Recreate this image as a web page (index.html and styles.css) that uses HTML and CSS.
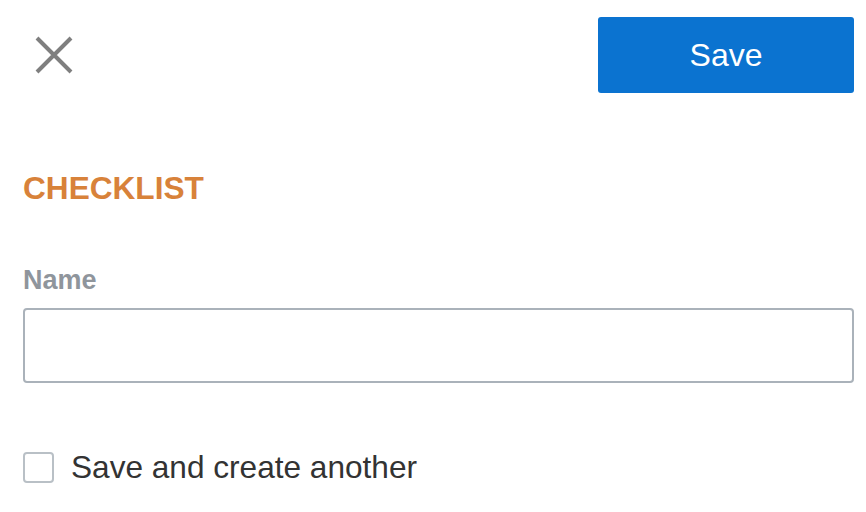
FILE: index.html
```html
<!DOCTYPE html>
<html lang="en">

<head>
  <meta charset="UTF-8" />
  <meta name="viewport" content="width=device-width, initial-scale=1.0" />
  <title>New Checklist</title>
  <link rel="stylesheet" href="styles.css">
</head>

<body>
  <div class="panel">
    <!-- Top bar -->
    <div class="topbar">
      <button class="close-btn" aria-label="Close">
        <svg width="38" height="38" viewBox="0 0 38 38">
          <path d="M2 2 L36 36 M36 2 L2 36" stroke="#7f7f7f" stroke-width="4" stroke-linecap="butt" />
        </svg>
      </button>
      <button class="save-btn">Save</button>
    </div>

    <h2 class="section-title">CHECKLIST</h2>

    <label class="field-label" for="nameInput">Name</label>
    <input class="field-input" type="text" id="nameInput" />

    <label class="check-row">
      <span class="check-box"></span>
      <span class="check-text">Save and create another</span>
    </label>
  </div>
</body>

</html>
```

FILE: styles.css
```css
/* General Styles */
body {
  font-family: "Liberation Sans", Arial, sans-serif;
  margin: 0;
  padding: 0;
  background: #ffffff;
  color: #333333;
}

.panel {
  display: flex;
  flex-direction: column;
  padding: 17px 12px 0 23px;
}

/* Top bar */
.topbar {
  display: flex;
  justify-content: space-between;
  align-items: center;
}

.close-btn {
  background: none;
  border: none;
  padding: 0;
  margin-left: 12px;
  width: 38px;
  height: 38px;
  cursor: pointer;
}

.close-btn svg {
  display: block;
}

.save-btn {
  width: 256px;
  height: 76px;
  background: #0b73d0;
  color: #ffffff;
  border: none;
  border-radius: 3px;
  font-family: "Liberation Sans", Arial, sans-serif;
  font-size: 32px;
  cursor: pointer;
}

/* Section */
.section-title {
  margin: 77px 0 0;
  font-size: 31.6px;
  line-height: 36px;
  font-weight: bold;
  color: #d8823a;
}

.field-label {
  margin-top: 59px;
  font-size: 27px;
  line-height: 30px;
  font-weight: bold;
  color: #8f959c;
}

.field-input {
  box-sizing: border-box;
  margin-top: 13px;
  height: 75px;
  width: 100%;
  border: 2px solid #aab2ba;
  border-radius: 4px;
  font-size: 26px;
  padding: 0 14px;
  outline: none;
}

/* Checkbox row */
.check-row {
  display: flex;
  align-items: center;
  gap: 17px;
  margin-top: 66px;
  cursor: pointer;
}

.check-box {
  box-sizing: border-box;
  width: 31px;
  height: 31px;
  border: 2px solid #b9c0c6;
  border-radius: 4px;
}

.check-text {
  font-size: 31.6px;
  line-height: 36px;
  color: #333333;
}
```
